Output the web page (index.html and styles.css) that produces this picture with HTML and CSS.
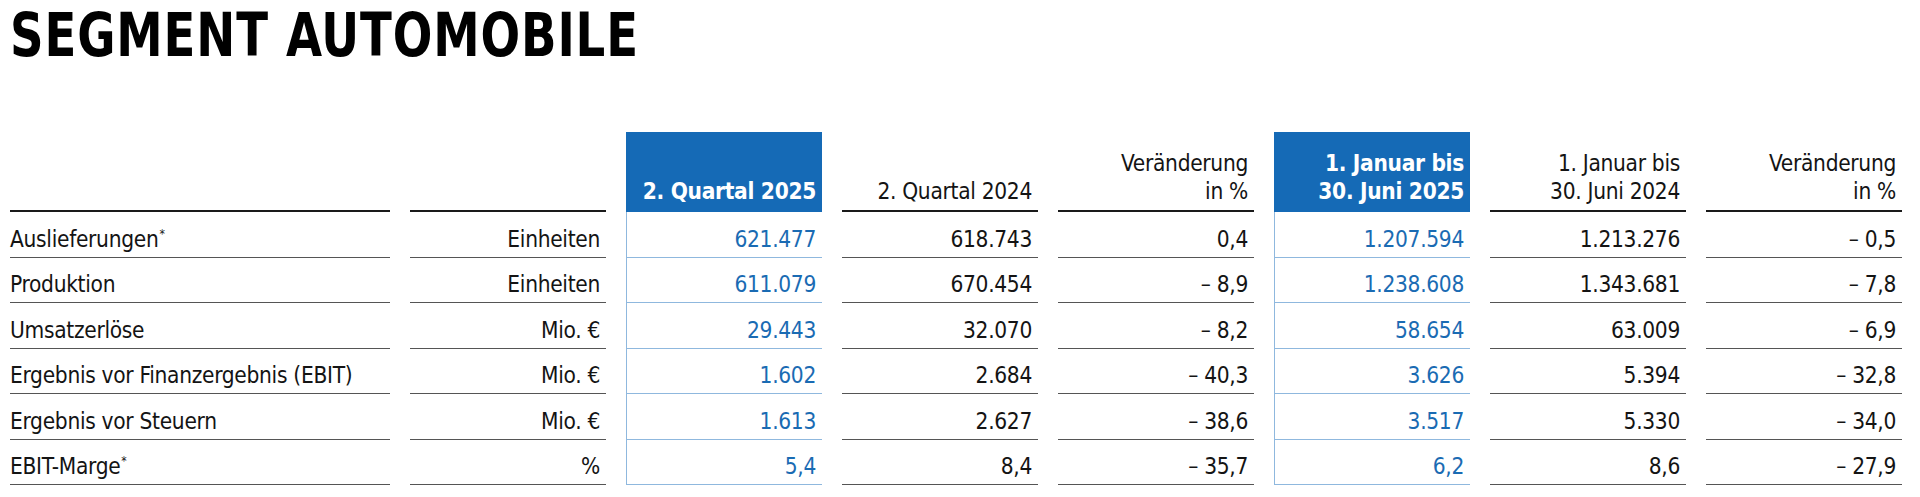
FILE: index.html
```html
<!DOCTYPE html>
<html lang="de">
<head>
<meta charset="utf-8">
<title>Segment Automobile</title>
<link rel="stylesheet" href="styles.css">
</head>
<body>
<div class="page">
  <h1 class="title">SEGMENT AUTOMOBILE</h1>
  <div class="table">
    <div class="cell head label"></div>
    <div class="cell head unit"></div>
    <div class="cell head hl"><span>2. Quartal 2025</span></div>
    <div class="cell head"><span>2. Quartal 2024</span></div>
    <div class="cell head"><span>Veränderung<br>in %</span></div>
    <div class="cell head hl"><span>1. Januar bis<br>30. Juni 2025</span></div>
    <div class="cell head"><span>1. Januar bis<br>30. Juni 2024</span></div>
    <div class="cell head"><span>Veränderung<br>in %</span></div>

    <div class="cell label"><span>Auslieferungen<sup>*</sup></span></div>
    <div class="cell">Einheiten</div>
    <div class="cell hl">621.477</div>
    <div class="cell">618.743</div>
    <div class="cell">0,4</div>
    <div class="cell hl">1.207.594</div>
    <div class="cell">1.213.276</div>
    <div class="cell">– 0,5</div>

    <div class="cell label">Produktion</div>
    <div class="cell">Einheiten</div>
    <div class="cell hl">611.079</div>
    <div class="cell">670.454</div>
    <div class="cell">– 8,9</div>
    <div class="cell hl">1.238.608</div>
    <div class="cell">1.343.681</div>
    <div class="cell">– 7,8</div>

    <div class="cell label">Umsatzerlöse</div>
    <div class="cell">Mio. €</div>
    <div class="cell hl">29.443</div>
    <div class="cell">32.070</div>
    <div class="cell">– 8,2</div>
    <div class="cell hl">58.654</div>
    <div class="cell">63.009</div>
    <div class="cell">– 6,9</div>

    <div class="cell label">Ergebnis vor Finanzergebnis (EBIT)</div>
    <div class="cell">Mio. €</div>
    <div class="cell hl">1.602</div>
    <div class="cell">2.684</div>
    <div class="cell">– 40,3</div>
    <div class="cell hl">3.626</div>
    <div class="cell">5.394</div>
    <div class="cell">– 32,8</div>

    <div class="cell label">Ergebnis vor Steuern</div>
    <div class="cell">Mio. €</div>
    <div class="cell hl">1.613</div>
    <div class="cell">2.627</div>
    <div class="cell">– 38,6</div>
    <div class="cell hl">3.517</div>
    <div class="cell">5.330</div>
    <div class="cell">– 34,0</div>

    <div class="cell label"><span>EBIT-Marge<sup>*</sup></span></div>
    <div class="cell">%</div>
    <div class="cell hl">5,4</div>
    <div class="cell">8,4</div>
    <div class="cell">– 35,7</div>
    <div class="cell hl">6,2</div>
    <div class="cell">8,6</div>
    <div class="cell">– 27,9</div>
  </div>
</div>
</body>
</html>
```

FILE: styles.css
```css
html, body {
  margin: 0;
  padding: 0;
  background: #ffffff;
}

.page {
  padding: 4px 0 0 10px;
  font-family: "DejaVu Sans Condensed", "Liberation Sans", sans-serif;
  color: #141414;
}

.title {
  margin: 0;
  font-size: 61px;
  line-height: 61px;
  font-weight: 700;
  letter-spacing: 1px;
  color: #000000;
  transform: scaleX(0.85);
  transform-origin: left center;
  white-space: nowrap;
}

.table {
  margin-top: 67px;
  display: grid;
  grid-template-columns: 380px repeat(7, 196px);
  column-gap: 20px;
}

.cell {
  box-sizing: border-box;
  height: 45.5px;
  display: flex;
  align-items: flex-end;
  justify-content: flex-end;
  text-align: right;
  font-size: 22.5px;
  letter-spacing: -0.3px;
  line-height: 28px;
  padding: 0 6px 4px 0;
  border-bottom: 1.5px solid #555555;
  white-space: nowrap;
}

.cell.label {
  justify-content: flex-start;
  text-align: left;
  padding-left: 0;
}

.cell.hl {
  color: #1a6bb3;
  border-left: 1.5px solid #8fb8de;
  border-bottom-color: #8fb8de;
}

.cell.head {
  height: 80px;
  border-bottom: 2px solid #1a1a1a;
  padding-bottom: 5px;
}

.cell.head.hl {
  background: #156ab6;
  color: #ffffff;
  font-weight: 700;
  border-left: none;
  border-bottom-color: #156ab6;
}

sup {
  font-size: 12px;
  line-height: 0;
  vertical-align: 9px;
  margin-left: 1px;
}
```
